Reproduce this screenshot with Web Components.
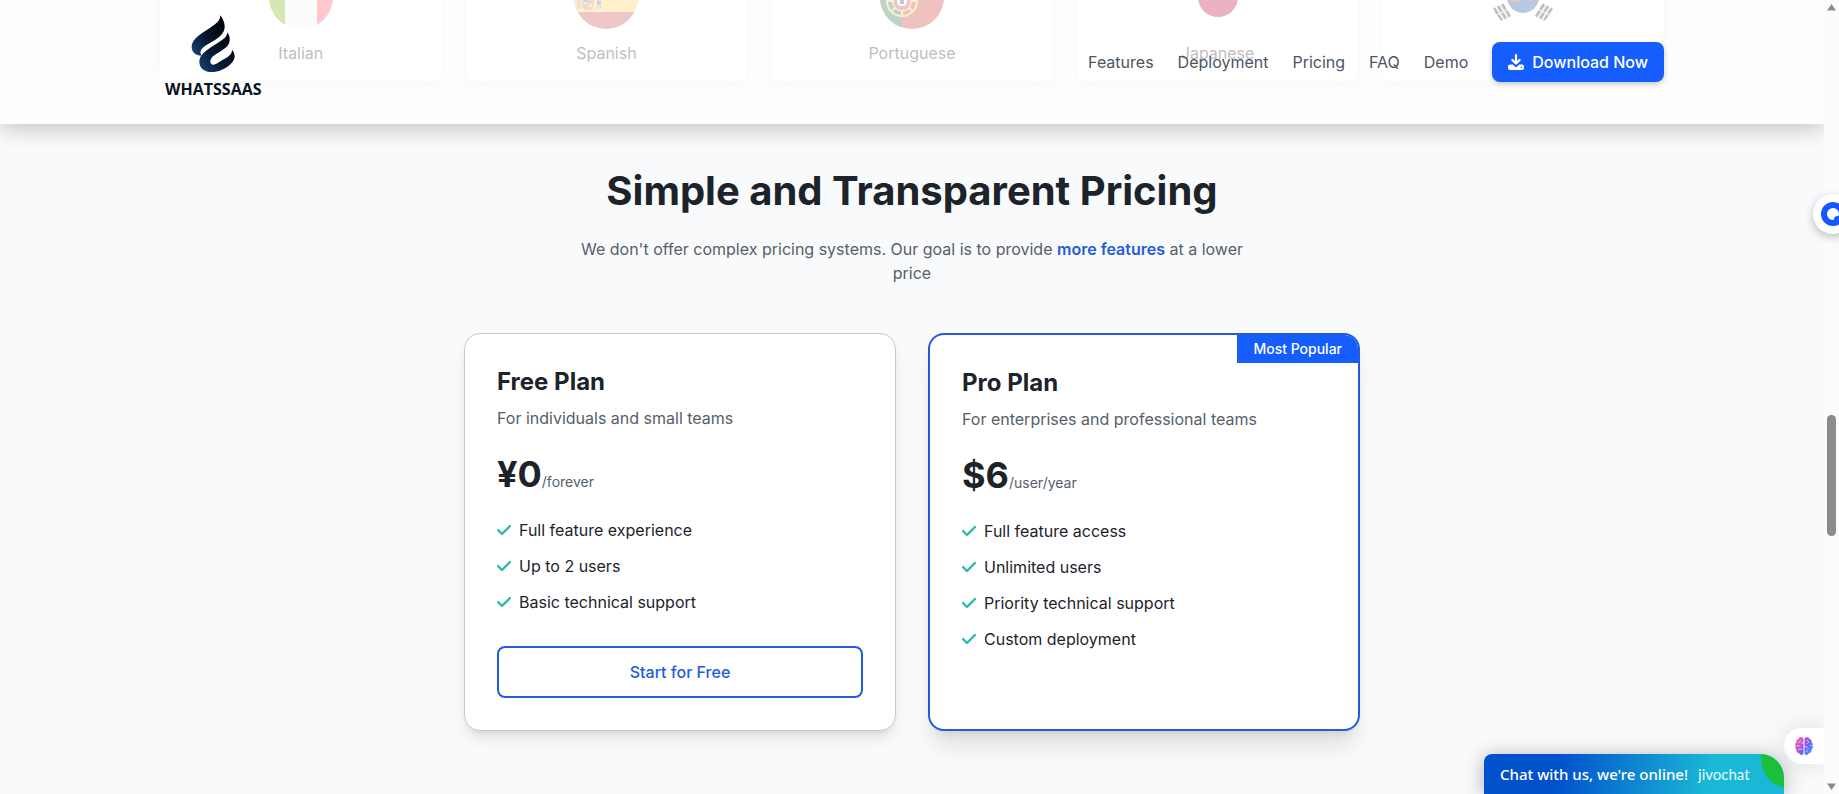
<!DOCTYPE html>
<html lang="en">
<head>
<meta charset="utf-8">
<title>WhatsSaas – Pricing</title>
<style>
html,body{margin:0;height:100%;overflow:hidden}
body{font:16px/24px Inter,"Liberation Sans",sans-serif;color:#1d232a;background:#f9fafb}
</style>
</head>
<body>
<app-page></app-page>

<script>
const define = (name, html) => customElements.define(name, class extends HTMLElement {
  constructor() {
    super();
    const t = document.createElement('template');
    t.innerHTML = html.replace(/\{\{([\w-]+)\}\}/g, (_, a) => this.getAttribute(a) || '');
    this.attachShadow({ mode: 'open' }).append(t.content.cloneNode(true));
  }
});

define('language-card', `
<style>
:host{display:flex;flex-direction:column;align-items:center;padding:16px;background:#fff;border-radius:8px;box-shadow:0 4px 12px rgba(0,0,0,.08)}
.flag{width:64px;height:64px;border-radius:50%;overflow:hidden;margin-bottom:12px}
::slotted(svg){display:block;width:64px;height:64px}
</style>
<div class="flag"><slot name="flag"></slot></div>
<span><slot></slot></span>`);

define('language-list', `
<style>
:host{display:block;margin-top:-51px;padding-bottom:20px}
.grid{display:grid;grid-template-columns:repeat(5,1fr);gap:24px;max-width:1504px;margin:0 auto;padding:0 16px;}
</style>
<div class="grid">
<language-card>Italian<svg slot="flag" viewBox="0 0 64 64"><path fill="#f4f4f4" d="M0 0h64v64H0z"/><path fill="#73af00" d="M0 0h16v64H0z"/><path fill="#ff4b55" d="M48 0h16v64H48z"/></svg></language-card>
<language-card>Spanish<svg slot="flag" viewBox="0 0 64 64"><path fill="#c8414b" d="M0 0h64v64H0z"/><path fill="#ffd250" d="M0 14h64v33H0z"/><path fill="#e0905a" d="M3 30h4v13H3zM23 30h4v8h-4z"/><path fill="#e0805a" d="M8 32h12v7q0 6-6 6t-6-6z"/><path fill="#ffc0a0" d="M10 36h3v3h-3zM15 39h3v3h-3z"/><path fill="#5064aa" d="M10 33h4v4h-4zM23 36h4v4h-4z"/><path fill="#aaa" d="M22 41h6v3h-6zM2 42h5v2H2z"/></svg></language-card>
<language-card>Portuguese<svg slot="flag" viewBox="0 0 64 64"><path fill="#c8342e" d="M0 0h64v64H0z"/><path fill="#2b6a3c" d="M0 0h22v64H0z"/><circle cx="22" cy="36" r="15" fill="none" stroke="#e2cf55" stroke-width="2"/><path d="M7 36h30M22 21v30M11 25l22 22M33 25L11 47" stroke="#e2cf55" stroke-width="2"/><path fill="#d23c35" stroke="#fff" stroke-width="1" d="M13 25h18v12q0 8-9 9-9-1-9-9z"/><path fill="#fff" d="M17 28h10v8q0 5-5 5t-5-5z"/><path fill="#284a88" d="M20 35h4v4h-4z"/></svg></language-card>
<language-card>Japanese<svg slot="flag" viewBox="0 0 64 64"><path fill="#fff" d="M0 0h64v64H0z"/><circle cx="32" cy="32" r="20" fill="#bc002d"/></svg></language-card>
<language-card>Korean<svg slot="flag" viewBox="0 0 64 64"><path fill="#fff" d="M0 0h64v64H0z"/><circle cx="32" cy="32" r="16" fill="#0f4c9c"/><path fill="#cd2e3a" d="M16 32a16 16 0 0 1 32 0c-3 5-13 5-16 0-3 7-12 7-16 0z"/><g stroke="#333" stroke-width="3" stroke-dasharray="7 1 7"><path d="M3 43l8 13M7 41l8 13M11 39l8 13M61 43l-8 13M57 41l-8 13M53 39l-8 13"/></g></svg></language-card>
</div>`);

define('brand-logo', `
<style>
:host{display:block;padding:0 5px}
a{display:flex;flex-direction:column;align-items:center;color:#0b1322;text-decoration:none;font:700 16px/24px "Open Sans","Noto Sans",sans-serif}
svg{display:block;width:44px;height:58px;margin-bottom:4px}
</style>
<a href="#home">
<svg viewBox="105 16 132 174" aria-hidden="true">
<defs><linearGradient id="a" x1="0" y1=".8" x2=".8" y2=".1"><stop offset="0" stop-color="#143c6c"/><stop offset=".4" stop-color="#081a34"/><stop offset="1" stop-color="#02040c"/></linearGradient></defs>
<path fill="url(#a)" d="M193 17C193 35 178 45 151 62C125 78 107 93 107 112C107 127 119 138 137 138C129 128 135 116 150 107C170 94 204 80 206 54C207 39 200 26 193 17Z"/>
<path fill="url(#a)" d="M214 68C214 84 198 92 174 107C149 123 130 137 130 156C130 176 146 187 167 187C200 187 235 161 236 141C236 132 233 125 228 120C228 137 213 143 198 152C184 161 178 166 170 165C160 162 161 148 172 139C190 125 220 116 221 92C222 83 219 74 214 68Z"/>
</svg>
<span>WHATSSAAS</span></a>`);

define('site-header', `
<style>
:host{position:absolute;inset:0 0 auto 0;z-index:2;background:rgba(255,255,255,.7);box-shadow:0 6px 20px rgba(0,0,0,.2)}
.bar{box-sizing:border-box;display:flex;justify-content:space-between;align-items:center;height:124px;max-width:1536px;margin:0 auto;padding:0 16px}
brand-logo{padding-bottom:8px}
nav{display:flex;align-items:center;gap:24px}
nav a{color:#4b5563;text-decoration:none}
button{display:flex;align-items:center;gap:8px;height:40px;padding:0 16px;border:0;border-radius:8px;background:#155dfc;color:#fff;font:500 16px/24px Inter,sans-serif;box-shadow:0 2px 5px rgba(0,0,0,.2)}
svg{width:16px;height:16px}
</style>
<header class="bar"><brand-logo></brand-logo>
<nav><a href="#features">Features</a><a href="#deployment">Deployment</a><a href="#pricing">Pricing</a><a href="#faq">FAQ</a><a href="#demo">Demo</a>
<button type="button"><svg viewBox="0 0 512 512" fill="none" stroke="currentColor" stroke-linecap="round" stroke-linejoin="round" aria-hidden="true"><path stroke-width="72" d="M256 36V290M140 190L256 306L372 190"/><path fill="currentColor" stroke="none" d="M64 336H152L218 398Q256 430 294 398L360 336H448Q512 336 512 400V448Q512 512 448 512H64Q0 512 0 448V400Q0 336 64 336ZM432 404a22 22 0 1 0 0 44a22 22 0 1 0 0-44Z"/></svg>Download Now</button></nav></header>`);

define('plan-feature', `
<style>
:host{display:flex;align-items:center;gap:8px}
svg{width:14px;height:16px;fill:#2eb8b0;stroke:#2eb8b0;stroke-width:12}
</style>
<svg viewBox="0 0 448 512" aria-hidden="true"><path d="M438.600 105.400c12.500 12.500 12.500 32.800 0 45.300l-256 256c-12.500 12.500-32.800 12.500-45.300 0l-128-128c-12.500-12.500-12.500-32.800 0-45.300s32.800-12.500 45.300 0L160 338.700 393.400 105.400c12.500-12.500 32.800-12.500 45.300 0z"/></svg>
<span><slot></slot></span>`);

define('plan-card', `
<style>
:host{display:block;position:relative;box-sizing:border-box;background:#fff;border:1px solid #c8cad0;border-radius:16px;padding:32px;box-shadow:0 10px 15px -3px rgba(0,0,0,.1),0 4px 6px -4px rgba(0,0,0,.1);overflow:hidden}
:host([popular]){border:2px solid #245bdb;box-shadow:0 20px 25px -5px rgba(0,0,0,.1),0 8px 10px -6px rgba(0,0,0,.1)}
h3{margin:0 0 8px;font:700 24px/32px Inter,sans-serif}
p{margin:0;color:#566069}
.price{display:flex;align-items:baseline;height:40px;margin:24px 0}
strong{font:700 36px/40px Inter,sans-serif}
.price span{font-size:14px;line-height:20px;color:#566069}
.list{display:grid;gap:12px}
::slotted(button){display:block;width:100%;height:52px;margin-top:32px;border:2px solid #245bdb;border-radius:8px;background:#fff;color:#245bdb;font:500 16px/24px Inter,sans-serif}
::slotted(b){position:absolute;top:0;right:0;background:#155dfc;color:#fff;font:500 14px/20px Inter,sans-serif;padding:4px 16px}
</style>
<slot name="badge"></slot>
<h3>{{name}}</h3><p>{{note}}</p>
<div class="price"><strong>{{price}}</strong><span>{{per}}</span></div>
<div class="list"><slot></slot></div>
<slot name="action"></slot>`);

define('pricing-section', `
<style>
:host{display:block;padding:0 16px}
h2{margin:0 0 20px;text-align:center;font:700 40px/52px Inter,sans-serif}
.lead{max-width:672px;margin:0 auto 48px;text-align:center;color:#566069}
.lead b{font-weight:600;color:#245bdb}
.plans{display:grid;grid-template-columns:1fr 1fr;gap:32px;max-width:896px;margin:0 auto}
section{padding-top:64px;margin:0 auto}
</style>
<section id="pricing"><h2>Simple and Transparent Pricing</h2>
<p class="lead">We don't offer complex pricing systems. Our goal is to provide <b>more features</b> at a lower price</p>
<div class="plans">
<plan-card name="Free Plan" note="For individuals and small teams" price="¥0" per="/forever">
<plan-feature>Full feature experience</plan-feature><plan-feature>Up to 2 users</plan-feature><plan-feature>Basic technical support</plan-feature>
<button slot="action" type="button">Start for Free</button></plan-card>
<plan-card popular name="Pro Plan" note="For enterprises and professional teams" price="$6" per="/user/year"><b slot="badge">Most Popular</b>
<plan-feature>Full feature access</plan-feature><plan-feature>Unlimited users</plan-feature><plan-feature>Priority technical support</plan-feature><plan-feature>Custom deployment</plan-feature></plan-card>
</div></section>`);

define('chat-launcher', `
<style>
:host{position:absolute;right:40px;bottom:0;z-index:3}
button{position:relative;overflow:hidden;display:flex;align-items:center;gap:10px;box-sizing:border-box;width:300px;height:40px;padding:0 16px;border:0;border-radius:8px 24px 0 0;background:linear-gradient(100deg,#0251cc 25%,#1ab8d6 75%);color:#fff;font:500 15px/24px "Noto Sans","Open Sans",sans-serif;white-space:nowrap}
:host::before{content:"";position:absolute;inset:0;border-radius:8px 24px 0 0;box-shadow:0 2px 20px rgba(0,0,0,.3)}
.jivo{font:400 15px/24px Lato,sans-serif;color:#e4f8fb}
svg{position:absolute;right:0;top:0;width:24px;height:34px}
</style>
<button type="button"><span>Chat with us, we're online!</span><span class="jivo">jivochat</span>
<svg viewBox="0 0 24 34" aria-hidden="true"><path fill="#1bbf3a" d="M1 0H24V33C10 31 0 19 1 0Z"/></svg></button>`);

define('brain-tab', `
<style>
:host{position:absolute;right:0;bottom:30px;z-index:2}
button{display:flex;align-items:center;width:40px;height:36px;padding:0 0 0 11px;border:0;border-radius:18px 0 0 18px;background:#fff;box-shadow:0 0 24px rgba(0,0,0,.12)}
svg{width:18px;height:18px}
</style>
<button type="button" aria-label="Assistant"><svg viewBox="0 0 18 18" aria-hidden="true"><defs><linearGradient id="g" x1="0" y1="0" x2="1" y2=".8"><stop offset="0" stop-color="#ff6a4a"/><stop offset=".3" stop-color="#d456d0"/><stop offset=".65" stop-color="#7a5cf0"/><stop offset="1" stop-color="#2fa4ff"/></linearGradient></defs>
<path fill="url(#g)" d="M8.500 1.500Q8 0 6 0 4 0 3.500 2 1 2.500 1.500 5 0 6.500 0 9t1.500 4Q1 15.500 4 16q.5 2 2.500 2 2 0 2-2zM9.500 1.500Q10 0 12 0q2 0 2.500 2 2.500.5 2 3Q18 6.500 18 9t-1.500 4q.5 2.500-2.500 3-.5 2-2.500 2-2 0-2-2z"/>
<path fill="none" stroke="#fff" stroke-opacity=".75" stroke-width=".8" d="M3 5.500q2 0 2.500-2M0 9h5.500M8.500 6H6M3 13q2-2 4-.5M12 3l2 2-2 2M18 8.500h-2.500M9.500 9.500h2l2 2.500M11 14.500l2-1"/></svg></button>`);

define('side-bubble', `
<style>
:host{position:absolute;right:-14px;top:194px;z-index:5}
button{display:block;width:40px;height:40px;padding:8px;border:0;border-radius:50%;background:#fff;box-shadow:0 3px 10px rgba(0,0,0,.25)}
svg{display:block;width:24px;height:24px}
</style>
<button type="button" aria-label="Open side panel"><svg viewBox="0 0 24 24" aria-hidden="true"><circle cx="12" cy="12" r="12" fill="#1456ff"/><path fill="#fff" d="M12 6a6 6 0 1 0 0 12q1 0 1-1 0-3 4-3 1 0 1-2a6 6 0 0 0-6-6z"/></svg></button>`);

define('scroll-rail', `
<style>
:host{display:flex;flex-direction:column;align-items:center;justify-content:space-between;position:relative;width:15px;background:#fcfcfc}
svg{width:9px;height:7px;margin:4px 0;fill:#8b8b8b}
i{position:absolute;left:3px;top:415px;width:9px;height:121px;border-radius:5px;background:#8b8b8b}
</style>
<svg viewBox="0 0 9 7"><path d="M4.500 0L9 6.500H0z"/></svg><i></i><svg viewBox="0 0 9 7"><path d="M4.500 7L9 .5H0z"/></svg>`);

define('app-page', `
<style>
:host{display:flex;position:relative;height:100vh;overflow:hidden}
main{flex:1;min-width:0;position:relative;overflow:hidden;background:#f9fafb}
</style>
<main><site-header></site-header><language-list></language-list><pricing-section></pricing-section><brain-tab></brain-tab><chat-launcher></chat-launcher></main>
<scroll-rail></scroll-rail><side-bubble></side-bubble>`);
</script>
</body>
</html>
